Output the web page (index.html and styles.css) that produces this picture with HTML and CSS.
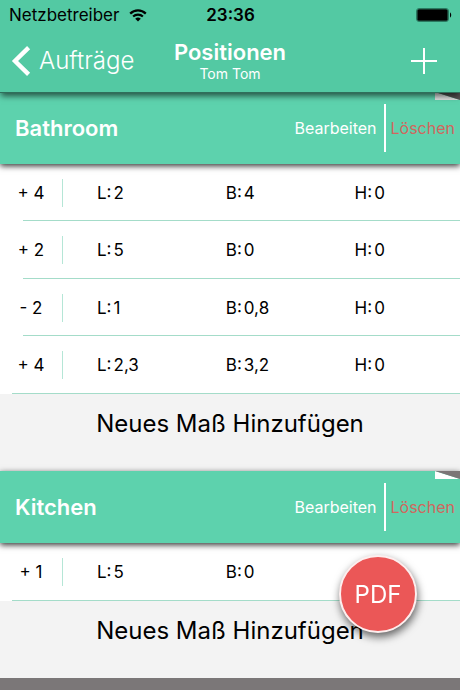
FILE: index.html
```html
<!DOCTYPE html>
<html lang="de">
  <head>
    <meta charset="UTF-8" />
    <meta name="viewport" content="width=device-width, initial-scale=1.0" />
    <title>Positionen</title>

    <link rel="stylesheet" href="styles.css">
  </head>
  <body>
    <header class="header">
      <div class="status-bar">
        <span class="carrier">
          Netzbetreiber
          <svg class="wifi" viewBox="0 0 18 13" width="18" height="13" fill="none" stroke="#000">
            <path d="M1.2 4.6a11 11 0 0 1 15.6 0" stroke-width="2.2" />
            <path d="M4.1 7.6a7 7 0 0 1 9.8 0" stroke-width="2.1" />
            <path d="M9 12.6L6.2 9.8a4 4 0 0 1 5.6 0z" fill="#000" stroke="none" />
          </svg>
        </span>
        <span class="time">23:36</span>
        <svg class="battery" viewBox="0 0 36 14" width="36" height="14">
          <rect x="0.5" y="0.5" width="32" height="13" rx="2.5" fill="none" stroke="#2b7a61" />
          <rect x="1.3" y="1.3" width="30.4" height="11.4" rx="1.5" />
          <path d="M34 4.5c1.6.6 1.6 4.4 0 5z" />
        </svg>
      </div>

      <nav class="nav">
        <button class="back nav-button">
          <svg viewBox="0 0 20 30" width="20" height="30" fill="none" stroke="#fff" stroke-width="4.4">
            <path d="M17.6 1.6L4 15l13.6 13.4" />
          </svg>
          Aufträge
        </button>

        <div class="nav-title">
          <h1>Positionen</h1>
          <p>Tom Tom</p>
        </div>

        <button class="add nav-button" aria-label="Hinzufügen">
          <svg viewBox="0 0 26 26" width="26" height="26" stroke="#fff" stroke-width="2">
            <path d="M13 0v26M0 13h26" />
          </svg>
        </button>
      </nav>
    </header>

    <main>
      <section class="room">
        <div class="room-header">
          <h2>Bathroom</h2>
          <button class="btn">Bearbeiten</button>
          <button class="btn btn-delete">Löschen</button>
          <svg class="fold" viewBox="0 0 25 8" width="25" height="8">
            <path d="M0 0v8h25z" fill="#ddd" />
            <path d="M0 0h25v8z" fill="#555152" />
          </svg>
        </div>

        <table class="measures">
          <tr>
            <th scope="row"><span>+ 4</span></th>
            <td><small>L:</small>2</td>
            <td><small>B:</small>4</td>
            <td><small>H:</small>0</td>
          </tr>
          <tr>
            <th scope="row"><span>+ 2</span></th>
            <td><small>L:</small>5</td>
            <td><small>B:</small>0</td>
            <td><small>H:</small>0</td>
          </tr>
          <tr>
            <th scope="row"><span>- 2</span></th>
            <td><small>L:</small>1</td>
            <td><small>B:</small>0,8</td>
            <td><small>H:</small>0</td>
          </tr>
          <tr>
            <th scope="row"><span>+ 4</span></th>
            <td><small>L:</small>2,3</td>
            <td><small>B:</small>3,2</td>
            <td><small>H:</small>0</td>
          </tr>
        </table>

        <button class="new-measure">Neues Maß Hinzufügen</button>
      </section>

      <section class="room">
        <div class="room-header">
          <h2>Kitchen</h2>
          <button class="btn">Bearbeiten</button>
          <button class="btn btn-delete">Löschen</button>
          <svg class="fold" viewBox="0 0 25 8" width="25" height="8">
            <path d="M0 0v8h25z" fill="#fff" />
            <path d="M0 0h25v8z" fill="#7b7576" />
          </svg>
        </div>

        <table class="measures">
          <tr>
            <th scope="row"><span>+ 1</span></th>
            <td><small>L:</small>5</td>
            <td><small>B:</small>0</td>
            <td></td>
          </tr>
        </table>

        <button class="new-measure">Neues Maß Hinzufügen</button>
      </section>
    </main>

    <button class="pdf">PDF</button>
  </body>
</html>
```

FILE: styles.css
```css
* {
  box-sizing: border-box;
}

body {
  background-color: #7b7778;
  margin: 0;
  min-height: 100vh;
  font-family: Inter, 'Liberation Sans', sans-serif;
  font-size: 17px;
  color: #000;
}

button {
  border: 0;
  background-color: transparent;
  padding: 0;
  font-family: inherit;
  cursor: pointer;
}

h1,
h2,
p {
  margin: 0;
}

svg {
  display: block;
}

/* Header */
.header {
  position: relative;
  z-index: 2;
  height: 93px;
  margin-bottom: -1px;
  background-color: #53c9a3;
  border-bottom: 1px solid #2f6f5b;
  box-shadow: 0 4px 6px -1px rgba(0, 0, 0, 0.6);
}

.status-bar {
  display: grid;
  grid-template-columns: 1fr auto 1fr;
  align-items: center;
  height: 30px;
  padding: 0 8px 0 9px;
}

.carrier {
  display: flex;
  align-items: center;
  gap: 10px;
}

.time {
  font-weight: 600;
}

.battery {
  justify-self: end;
}

.nav {
  display: grid;
  grid-template-columns: 1fr auto 1fr;
  align-items: center;
  height: 61px;
  padding: 0 11px;
  color: #fff;
}

.nav-button {
  display: flex;
  align-items: center;
  color: #fff;
}

.back {
  justify-self: start;
  gap: 8px;
  font-size: 24px;
  font-weight: 300;
}

.add {
  justify-self: end;
  margin-right: 12px;
}

.nav-title {
  text-align: center;
}

.nav-title h1 {
  font-size: 22px;
  line-height: 26px;
  font-weight: 600;
}

.nav-title p {
  font-size: 14px;
  line-height: 18px;
}

/* Rooms */
.room {
  background-color: #f3f3f3;
}

.room-header {
  position: relative;
  display: flex;
  align-items: center;
  height: 72px;
  padding: 0 5px 0 15px;
  background-color: #5dd2ad;
  box-shadow: 0 2px 6px rgba(0, 0, 0, 0.8);
}

.room-header h2 {
  flex: 1;
  font-size: 22px;
  font-weight: 600;
  color: #fff;
}

.btn {
  height: 48px;
  padding-right: 7px;
  font-size: 16px;
  color: #fff;
}

.btn-delete {
  border-left: 2px solid #fff;
  padding: 0 0 0 5px;
  color: #d1675e;
}

.fold {
  position: absolute;
  top: 0;
  right: 0;
}

/* Measures */
.measures {
  width: 100%;
  table-layout: fixed;
  border-spacing: 0;
  background-color: #fff;
}

.measures tr {
  position: relative;
  height: 57px;
}

.measures tr:nth-child(even),
.measures tr:last-child {
  height: 58px;
}

.measures tr::after {
  content: '';
  position: absolute;
  left: 23px;
  right: 0;
  bottom: 0;
  height: 1px;
  background-color: #a4dcc9;
}

.measures tr:last-child::after {
  left: 12px;
}

.measures th,
.measures td {
  padding: 0;
  text-align: left;
  font-weight: 400;
}

.measures th {
  width: 63px;
}

.measures th span {
  display: block;
  height: 28px;
  line-height: 28px;
  border-right: 1px solid #b5e6d6;
  text-align: center;
}

.measures td {
  width: 28%;
  padding-left: 34px;
}

.measures td:last-child {
  width: auto;
}

.measures small {
  margin-right: 2px;
  font-size: 17px;
}

.new-measure {
  display: block;
  width: 100%;
  height: 77px;
  padding-bottom: 19px;
  font-size: 24px;
  color: #000;
}

/* PDF button */
.pdf {
  position: fixed;
  right: 43px;
  bottom: 57px;
  z-index: 3;
  width: 78px;
  height: 78px;
  border: 2px solid #fdeeee;
  border-radius: 50%;
  background-color: #eb5757;
  box-shadow: 1px 4px 8px rgba(0, 0, 0, 0.6);
  font-size: 24px;
  color: #fff;
}
```
